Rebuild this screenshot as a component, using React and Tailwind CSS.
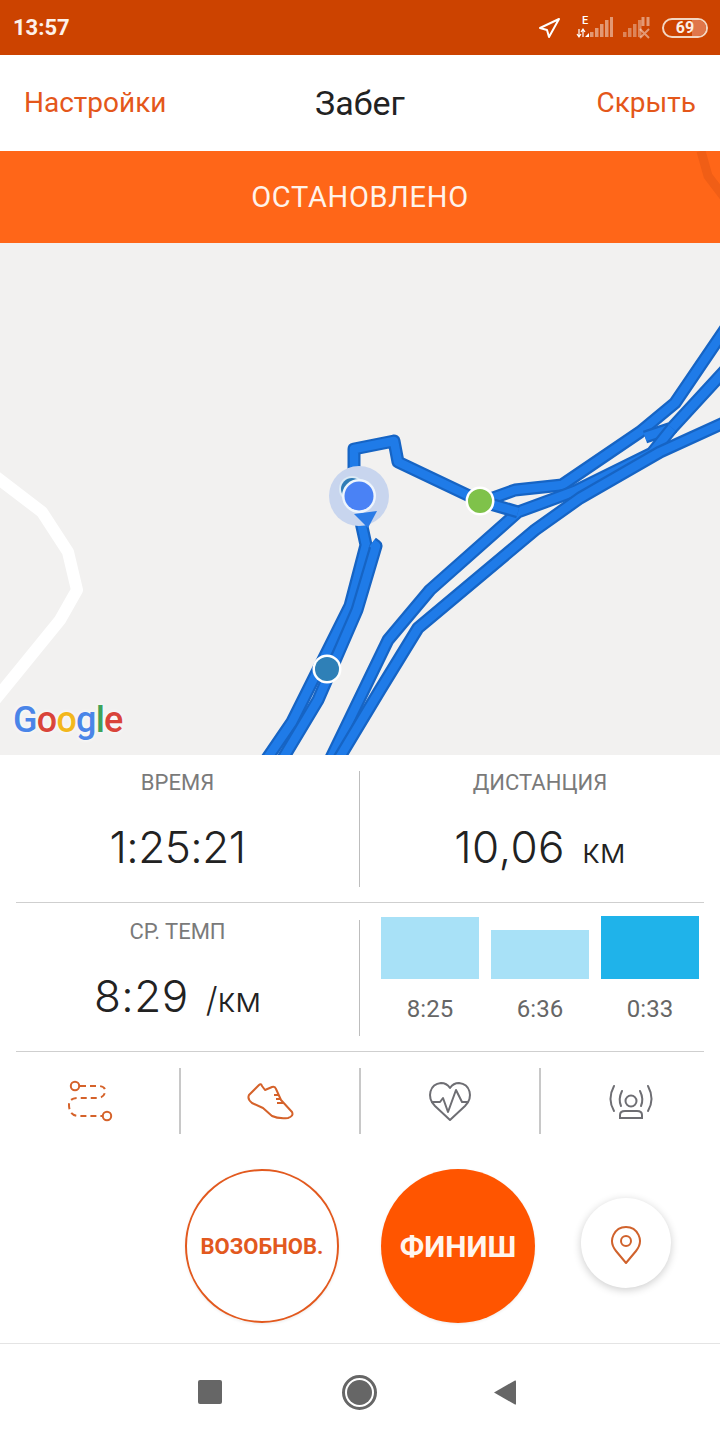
import React from "react";

const ROUTES = [
  "M730 322 L675 403 L640 432 L562 485 L515 490 L490 499",
  "M730 365 L672 428 L645 437",
  "M672 428 L652 453 L575 491 L518 512 L430 590 L388 640 L330 760",
  "M730 420 L660 452 L580 498 L535 530 L418 628 L380 690 L338 760",
  "M480 501 L398 462 L394 441 L354 449 L354 490 L366 545 L350 606 L292 722 L266 760",
  "M480 501 L518 512",
  "M372 543 L376 546 L357 610 L318 700 L282 760",
];

const Signal = ({ dim }) => (
  <g fill="#fff" opacity={dim ? 0.35 : 0.45}>
    <rect x="0" y="15" width="3.5" height="5" />
    <rect x="5" y="11" width="3.5" height="9" />
    <rect x="10" y="7" width="3.5" height="13" />
    <rect x="15" y="3" width="3.5" height="17" />
    {!dim && <rect x="20" y="0" width="3.5" height="20" />}
  </g>
);

const StatusIcons = () => (
  <div className="flex items-center">
    <svg width="24" height="24" viewBox="538 16 24 24" fill="none" stroke="#fff" strokeWidth="2" strokeLinejoin="round">
      <path d="M541 28 L560 19 L550 37 L548 30 Z" />
    </svg>
    <div className="relative ml-[15px] w-[37px] h-[24px]">
      <svg width="37" height="24" viewBox="0 0 37 24">
        <path d="M3 21 V13 M1 18 L3 21 L5 18 M7 13 V21 M5 16 L7 13 L9 16" stroke="#fff" strokeWidth="1.2" fill="none" />
        <path d="M9 21 L13 17 V21 Z" fill="#fff" />
        <g transform="translate(14 1)"><Signal /></g>
      </svg>
      <span className="absolute left-[6px] top-[-2px] text-[11px] font-medium leading-[14px] text-white font-['Roboto',sans-serif]">E</span>
    </div>
    <svg className="ml-[10px]" width="28" height="24" viewBox="0 0 28 24">
      <g transform="translate(0 1)"><Signal dim /></g>
      <path d="M20 1 V10 M25 1 V10" stroke="#fff" strokeWidth="3" opacity="0.45" />
      <path d="M17 13 L26 22 M26 13 L17 22" stroke="#fff" strokeWidth="2" opacity="0.45" />
    </svg>
    <div className="relative ml-[11px] w-[46px] h-[20px] rounded-full border-2 border-[#f3d6c2] flex items-center justify-center overflow-hidden">
      <div className="absolute right-0 top-0 bottom-0 w-[14px] bg-[#e0764a]" />
      <span className="relative text-[16px] font-bold leading-none text-[#fbeee6] font-['Roboto',sans-serif]">69</span>
    </div>
  </div>
);

const Map = () => (
  <div className="relative h-[512px] bg-[#f2f1f0] overflow-hidden">
    <svg className="block w-full h-full" viewBox="0 243 720 512" fill="none" strokeLinejoin="round">
      <path d="M-5 476 L42 512 L68 552 L77 590 L60 620 L-5 700" stroke="#fff" strokeWidth="12" />
      {ROUTES.map((d) => (
        <g key={d}>
          <path d={d} stroke="#1664c4" strokeWidth="13" />
          <path d={d} stroke="#1f7be8" strokeWidth="8.5" />
        </g>
      ))}
      <circle cx="359" cy="496" r="30" fill="#c8d5ee" />
      <path d="M354 514 L377 511 L368 528 Z" fill="#2b7be6" />
      <circle cx="352" cy="489" r="13" fill="#dceaf5" />
      <circle cx="352" cy="489" r="11" fill="#2f7cb6" />
      <circle cx="359" cy="496" r="17" fill="#eef5fd" />
      <circle cx="359" cy="496" r="14.5" fill="#4a82f5" />
      <circle cx="480" cy="501" r="14.5" fill="#fff" />
      <circle cx="480" cy="501" r="12" fill="#7fc24a" />
      <circle cx="327" cy="669" r="14.5" fill="#fff" />
      <circle cx="327" cy="669" r="12" fill="#2f80b7" />
    </svg>
    <div className="absolute left-[13px] top-[455px] text-[36px] font-medium leading-[44px] tracking-[-0.8px] font-['Roboto',sans-serif] [text-shadow:0_0_4px_#fff]">
      <span className="text-[#4a85e8]">G</span>
      <span className="text-[#d9443a]">o</span>
      <span className="text-[#f2b71c]">o</span>
      <span className="text-[#4a85e8]">g</span>
      <span className="text-[#3ea35a]">l</span>
      <span className="text-[#d9443a]">e</span>
    </div>
  </div>
);

const Stat = ({ label, value, unit, tracking = "tracking-[0.5px]", className = "" }) => (
  <div className={"flex flex-col items-center " + className}>
    <div className="text-[22px] leading-[24px] text-[#7a7a7a]">{label}</div>
    <div className="mt-[28px] flex items-baseline text-[#222] font-['Inter',sans-serif]">
      <span className={"text-[44px] font-light leading-[48px] " + tracking}>{value}</span>
      {unit && <span className="ml-[17px] text-[34px] font-light leading-[48px]">{unit}</span>}
    </div>
  </div>
);

const Bar = ({ height, color, label }) => (
  <div className="flex flex-col items-center w-[98px]">
    <div className="h-[63px] w-full flex items-end">
      <div className={"w-full " + color + " " + height} />
    </div>
    <div className="mt-[18px] text-[24px] leading-[24px] text-[#666]">{label}</div>
  </div>
);

const IconCell = ({ children, className = "" }) => (
  <div className={"h-[66px] flex items-center justify-center " + className}>
    {children}
  </div>
);

export default function App() {
  return (
    <div className="w-[720px] h-[1440px] bg-white overflow-hidden font-['Roboto',sans-serif]">
      <div className="h-[55px] bg-[#cc4300] flex items-center justify-between pl-[13px] pr-[12px]">
        <span className="text-[22px] font-bold text-[#fdf1ea]">13:57</span>
        <StatusIcons />
      </div>

      <div className="h-[96px] grid grid-cols-3 items-center px-[24px]">
        <span className="text-[28px] text-[#e4571a]">Настройки</span>
        <span className="text-[34px] text-[#222] text-center">Забег</span>
        <span className="text-[28px] text-[#e4571a] text-right">Скрыть</span>
      </div>

      <div className="relative h-[92px] bg-[#ff6618] flex items-center justify-center pt-[1px]">
        <span className="text-[29px] text-[#fff3ea] tracking-[0.7px]">ОСТАНОВЛЕНО</span>
        <svg className="absolute right-0 top-0" width="30" height="60" viewBox="690 151 30 60" fill="none">
          <path d="M701 151 L708 176 L724 197" stroke="#f05e16" strokeWidth="9" />
        </svg>
      </div>

      <Map />

      <div className="h-[148px] mx-[16px] border-b border-[#cfcfcf] pt-[16px]">
        <div className="grid grid-cols-2 h-[116px]">
          <Stat label="ВРЕМЯ" value="1:25:21" tracking="tracking-[-0.5px]" className="border-r border-[#bdbdbd] pr-[20px]" />
          <Stat label="ДИСТАНЦИЯ" value="10,06" unit="км" className="pl-[16px]" />
        </div>
      </div>

      <div className="h-[149px] mx-[16px] border-b border-[#cfcfcf] pt-[17px]">
        <div className="grid grid-cols-2 h-[116px]">
          <Stat label="СР. ТЕМП" value="8:29" unit="/км" className="border-r border-[#bdbdbd] pr-[20px]" />
          <div className="flex justify-between pl-[21px] pr-[5px] -mt-[4px]">
            <Bar height="h-[62px]" color="bg-[#a8e1f7]" label="8:25" />
            <Bar height="h-[49px]" color="bg-[#a8e1f7]" label="6:36" />
            <Bar height="h-[63px]" color="bg-[#1fb3ea]" label="0:33" />
          </div>
        </div>
      </div>

      <div className="flex pt-[16px] h-[92px]">
        <IconCell className="w-[181px] border-r-2 border-[#c8c8c8]">
          <svg width="60" height="50" viewBox="60 1076 60 50" fill="none" stroke="#d5622a" strokeWidth="2">
            <circle cx="75" cy="1086" r="4.2" />
            <circle cx="107" cy="1116" r="4.2" />
            <path d="M80 1086 H98 Q106 1086 105 1092 Q104 1098 97 1098 H78 Q69 1098 69 1105 Q69 1116 79 1116 H102" strokeDasharray="6 4" />
          </svg>
        </IconCell>
        <IconCell className="w-[180px] border-r-2 border-[#c8c8c8]">
          <svg width="60" height="50" viewBox="240 1076 60 50" fill="none" stroke="#d5622a" strokeWidth="2" strokeLinejoin="round">
            <path d="M249 1095 L259 1085 Q261 1083 262 1086 L265 1090 L272 1087 Q275 1086 276 1089 L281 1100 L292 1112 Q294 1116 288 1118 Q278 1119 272 1116 L263 1108 L252 1103 Q247 1099 249 1095 Z" />
            <path d="M274 1095 H279 M276 1099 H281 M277 1103 H283" />
          </svg>
        </IconCell>
        <IconCell className="w-[180px] border-r-2 border-[#c8c8c8]">
          <svg width="60" height="50" viewBox="420 1076 60 50" fill="none" stroke="#6e6e73" strokeWidth="2" strokeLinejoin="round">
            <path d="M450 1120 L435 1106 C426 1097 430 1084 441 1083 C445 1083 448 1085 450 1088 C452 1085 455 1083 459 1083 C470 1084 474 1097 465 1106 Z" />
            <path d="M431 1102 H440 L443 1098 L448 1112 L456 1090 L462 1102 H468" />
          </svg>
        </IconCell>
        <IconCell className="flex-1">
          <svg width="60" height="50" viewBox="600 1076 60 50" fill="none" stroke="#6e6e73" strokeWidth="2" strokeLinecap="round">
            <circle cx="630" cy="1101" r="5.5" />
            <path d="M619 1118 V1115 Q619 1111 624 1111 H636 Q641 1111 641 1115 V1118 Z" />
            <path d="M613 1086 Q606 1099 613 1111 M621 1091 Q617 1099 620 1106 M647 1086 Q654 1099 647 1111 M639 1091 Q643 1099 640 1106" />
          </svg>
        </IconCell>
      </div>

      <div className="h-[200px] border-b border-[#e4e4e4] flex items-start pl-[185px] pt-[25px]">
        <div className="w-[154px] h-[154px] rounded-full border-2 border-[#e2591e] flex items-center justify-center shadow-[0_1px_3px_rgba(0,0,0,0.08)]">
          <span className="text-[22px] font-bold text-[#e2591e]">ВОЗОБНОВ.</span>
        </div>
        <div className="ml-[42px] w-[154px] h-[154px] rounded-full bg-[#ff5500] flex items-center justify-center shadow-[0_1px_3px_rgba(0,0,0,0.08)]">
          <span className="text-[30px] font-bold text-[#fff5ee]">ФИНИШ</span>
        </div>
        <div className="ml-[46px] mt-[29px] w-[90px] h-[90px] rounded-full bg-white flex items-center justify-center shadow-[0_2px_8px_rgba(0,0,0,0.2)]">
          <svg width="32" height="44" viewBox="0 0 32 44" fill="none" stroke="#d0622c" strokeWidth="2">
            <path d="M16 42 L6 30 C-3 19 5 6 16 6 C27 6 35 19 26 30 Z" strokeLinejoin="round" />
            <circle cx="16" cy="20" r="5" />
          </svg>
        </div>
      </div>

      <div className="h-[96px] flex items-center pl-[198px]">
        <div className="w-[24px] h-[24px] rounded-[2px] bg-[#666]" />
        <div className="ml-[120px] w-[35px] h-[35px] rounded-full border-[3px] border-[#666] flex items-center justify-center">
          <div className="w-[25px] h-[25px] rounded-full bg-[#666]" />
        </div>
        <svg className="ml-[116px]" width="24" height="27" viewBox="0 0 24 27">
          <path d="M1 13.5 L22 1.5 Q23 1 23 2.5 V24.5 Q23 26 22 25.5 Z" fill="#666" />
        </svg>
      </div>
    </div>
  );
}
